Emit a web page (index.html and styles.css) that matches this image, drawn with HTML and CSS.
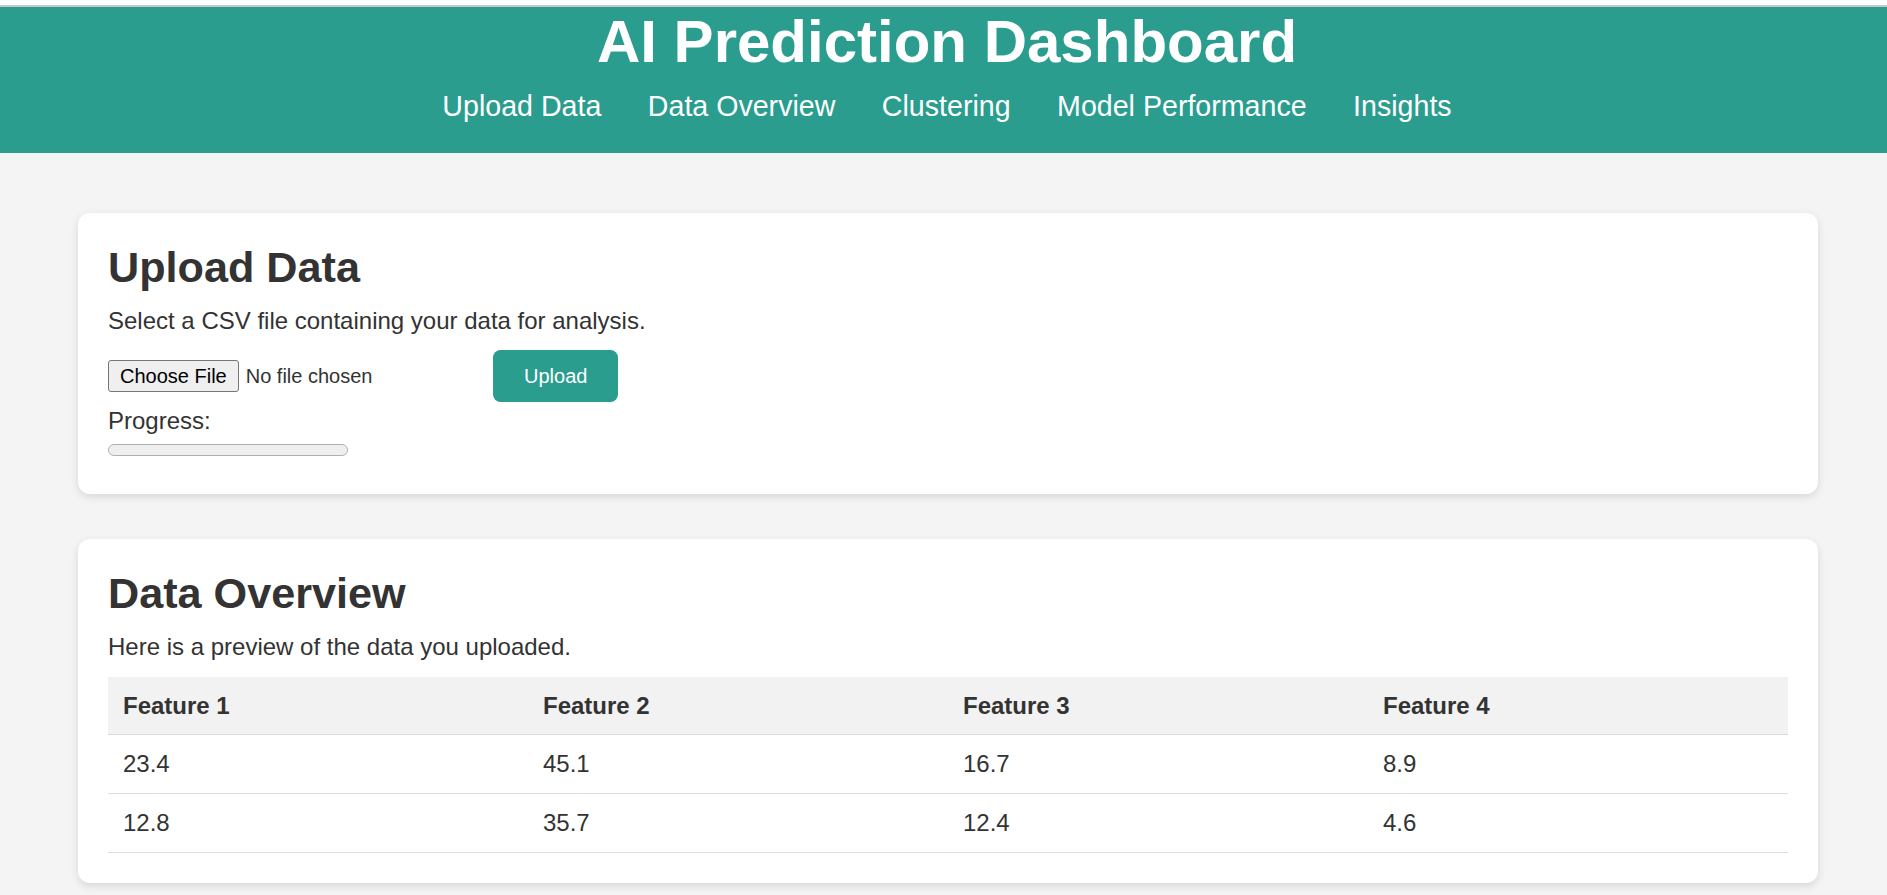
FILE: index.html
```html
<!DOCTYPE html>
<html lang="en">
<head>
<meta charset="utf-8">
<title>AI Prediction Dashboard</title>
<link rel="stylesheet" href="styles.css">
</head>
<body>
<div class="top-strip"></div>
<header class="site-header">
  <h1 class="site-title">AI Prediction Dashboard</h1>
  <nav class="site-nav">
    <a href="#upload">Upload Data</a>
    <a href="#overview">Data Overview</a>
    <a href="#clustering">Clustering</a>
    <a href="#performance">Model Performance</a>
    <a href="#insights">Insights</a>
  </nav>
</header>
<main class="content">
  <section class="card" id="upload">
    <h2 class="card-title">Upload Data</h2>
    <p class="card-text">Select a CSV file containing your data for analysis.</p>
    <form class="upload-row">
      <input type="file" class="file-input" accept=".csv">
      <button type="button" class="btn-primary">Upload</button>
    </form>
    <div class="progress-label">Progress:</div>
    <div class="progress"><div class="progress-fill" style="width:0%"></div></div>
  </section>
  <section class="card" id="overview">
    <h2 class="card-title">Data Overview</h2>
    <p class="card-text">Here is a preview of the data you uploaded.</p>
    <table class="data-table">
      <thead>
        <tr><th>Feature 1</th><th>Feature 2</th><th>Feature 3</th><th>Feature 4</th></tr>
      </thead>
      <tbody>
        <tr><td>23.4</td><td>45.1</td><td>16.7</td><td>8.9</td></tr>
        <tr><td>12.8</td><td>35.7</td><td>12.4</td><td>4.6</td></tr>
      </tbody>
    </table>
  </section>
</main>
</body>
</html>
```

FILE: styles.css
```css
html, body {
  margin: 0;
  padding: 0;
}

body {
  background: #f4f4f4;
  font-family: "Liberation Sans", Arial, sans-serif;
  color: #333;
}

.top-strip {
  height: 5px;
  background: #ffffff;
  border-bottom: 2px solid #c8c8c8;
}

.site-header {
  background: #2a9d8f;
  color: #ffffff;
  text-align: center;
  padding: 0 0 30px 7px;
}

.site-title {
  margin: 0;
  font-size: 60px;
  line-height: 69px;
  font-weight: bold;
}

.site-nav {
  display: flex;
  justify-content: center;
  gap: 46.5px;
  margin-top: 13.5px;
}

.site-nav a {
  color: #ffffff;
  text-decoration: none;
  font-size: 28.6px;
  line-height: 33px;
}

.content {
  display: flex;
  flex-direction: column;
  gap: 45px;
  padding: 60px 69px 45px 78px;
}

.card {
  background: #ffffff;
  border-radius: 12px;
  padding: 30px;
  box-shadow: 0 3px 9px rgba(0, 0, 0, 0.12);
}

.card-title {
  margin: 0 0 15px;
  font-size: 43.2px;
  line-height: 49px;
  font-weight: bold;
  color: #333;
}

.card-text {
  margin: 0 0 16px;
  font-size: 24px;
  line-height: 27.6px;
}

.upload-row {
  display: flex;
  align-items: center;
  height: 52px;
  margin: 0;
}

.file-input {
  width: 385px;
  font-family: "Liberation Sans", Arial, sans-serif;
  font-size: 20px;
  color: #333;
  padding: 0;
  margin: 0;
}

.file-input::file-selector-button {
  font-family: "Liberation Sans", Arial, sans-serif;
  font-size: 20px;
  height: 32px;
  padding: 0 11px;
  margin: 0 7px 0 0;
  background: #efefef;
  border: 1px solid #767676;
  border-radius: 3px;
  color: #000;
}

.btn-primary {
  height: 52px;
  padding: 0 31px;
  border: none;
  border-radius: 7.5px;
  background: #2a9d8f;
  color: #ffffff;
  font-family: "Liberation Sans", Arial, sans-serif;
  font-size: 20px;
}

.progress-label {
  margin-top: 5px;
  font-size: 24px;
  line-height: 27.6px;
}

.progress {
  box-sizing: border-box;
  width: 240px;
  height: 12px;
  margin: 9.5px 0 8px;
  background: #efefef;
  border: 1.5px solid #b0b0b0;
  border-radius: 6px;
  overflow: hidden;
}

.progress-fill {
  height: 100%;
  background: #2a9d8f;
}

.data-table {
  width: 100%;
  table-layout: fixed;
  border-collapse: collapse;
  font-size: 24px;
  line-height: 27.6px;
}

.data-table th,
.data-table td {
  text-align: left;
  padding: 15px;
  border-bottom: 1.5px solid #dddddd;
}

.data-table th {
  background: #f2f2f2;
  font-weight: bold;
}
```
